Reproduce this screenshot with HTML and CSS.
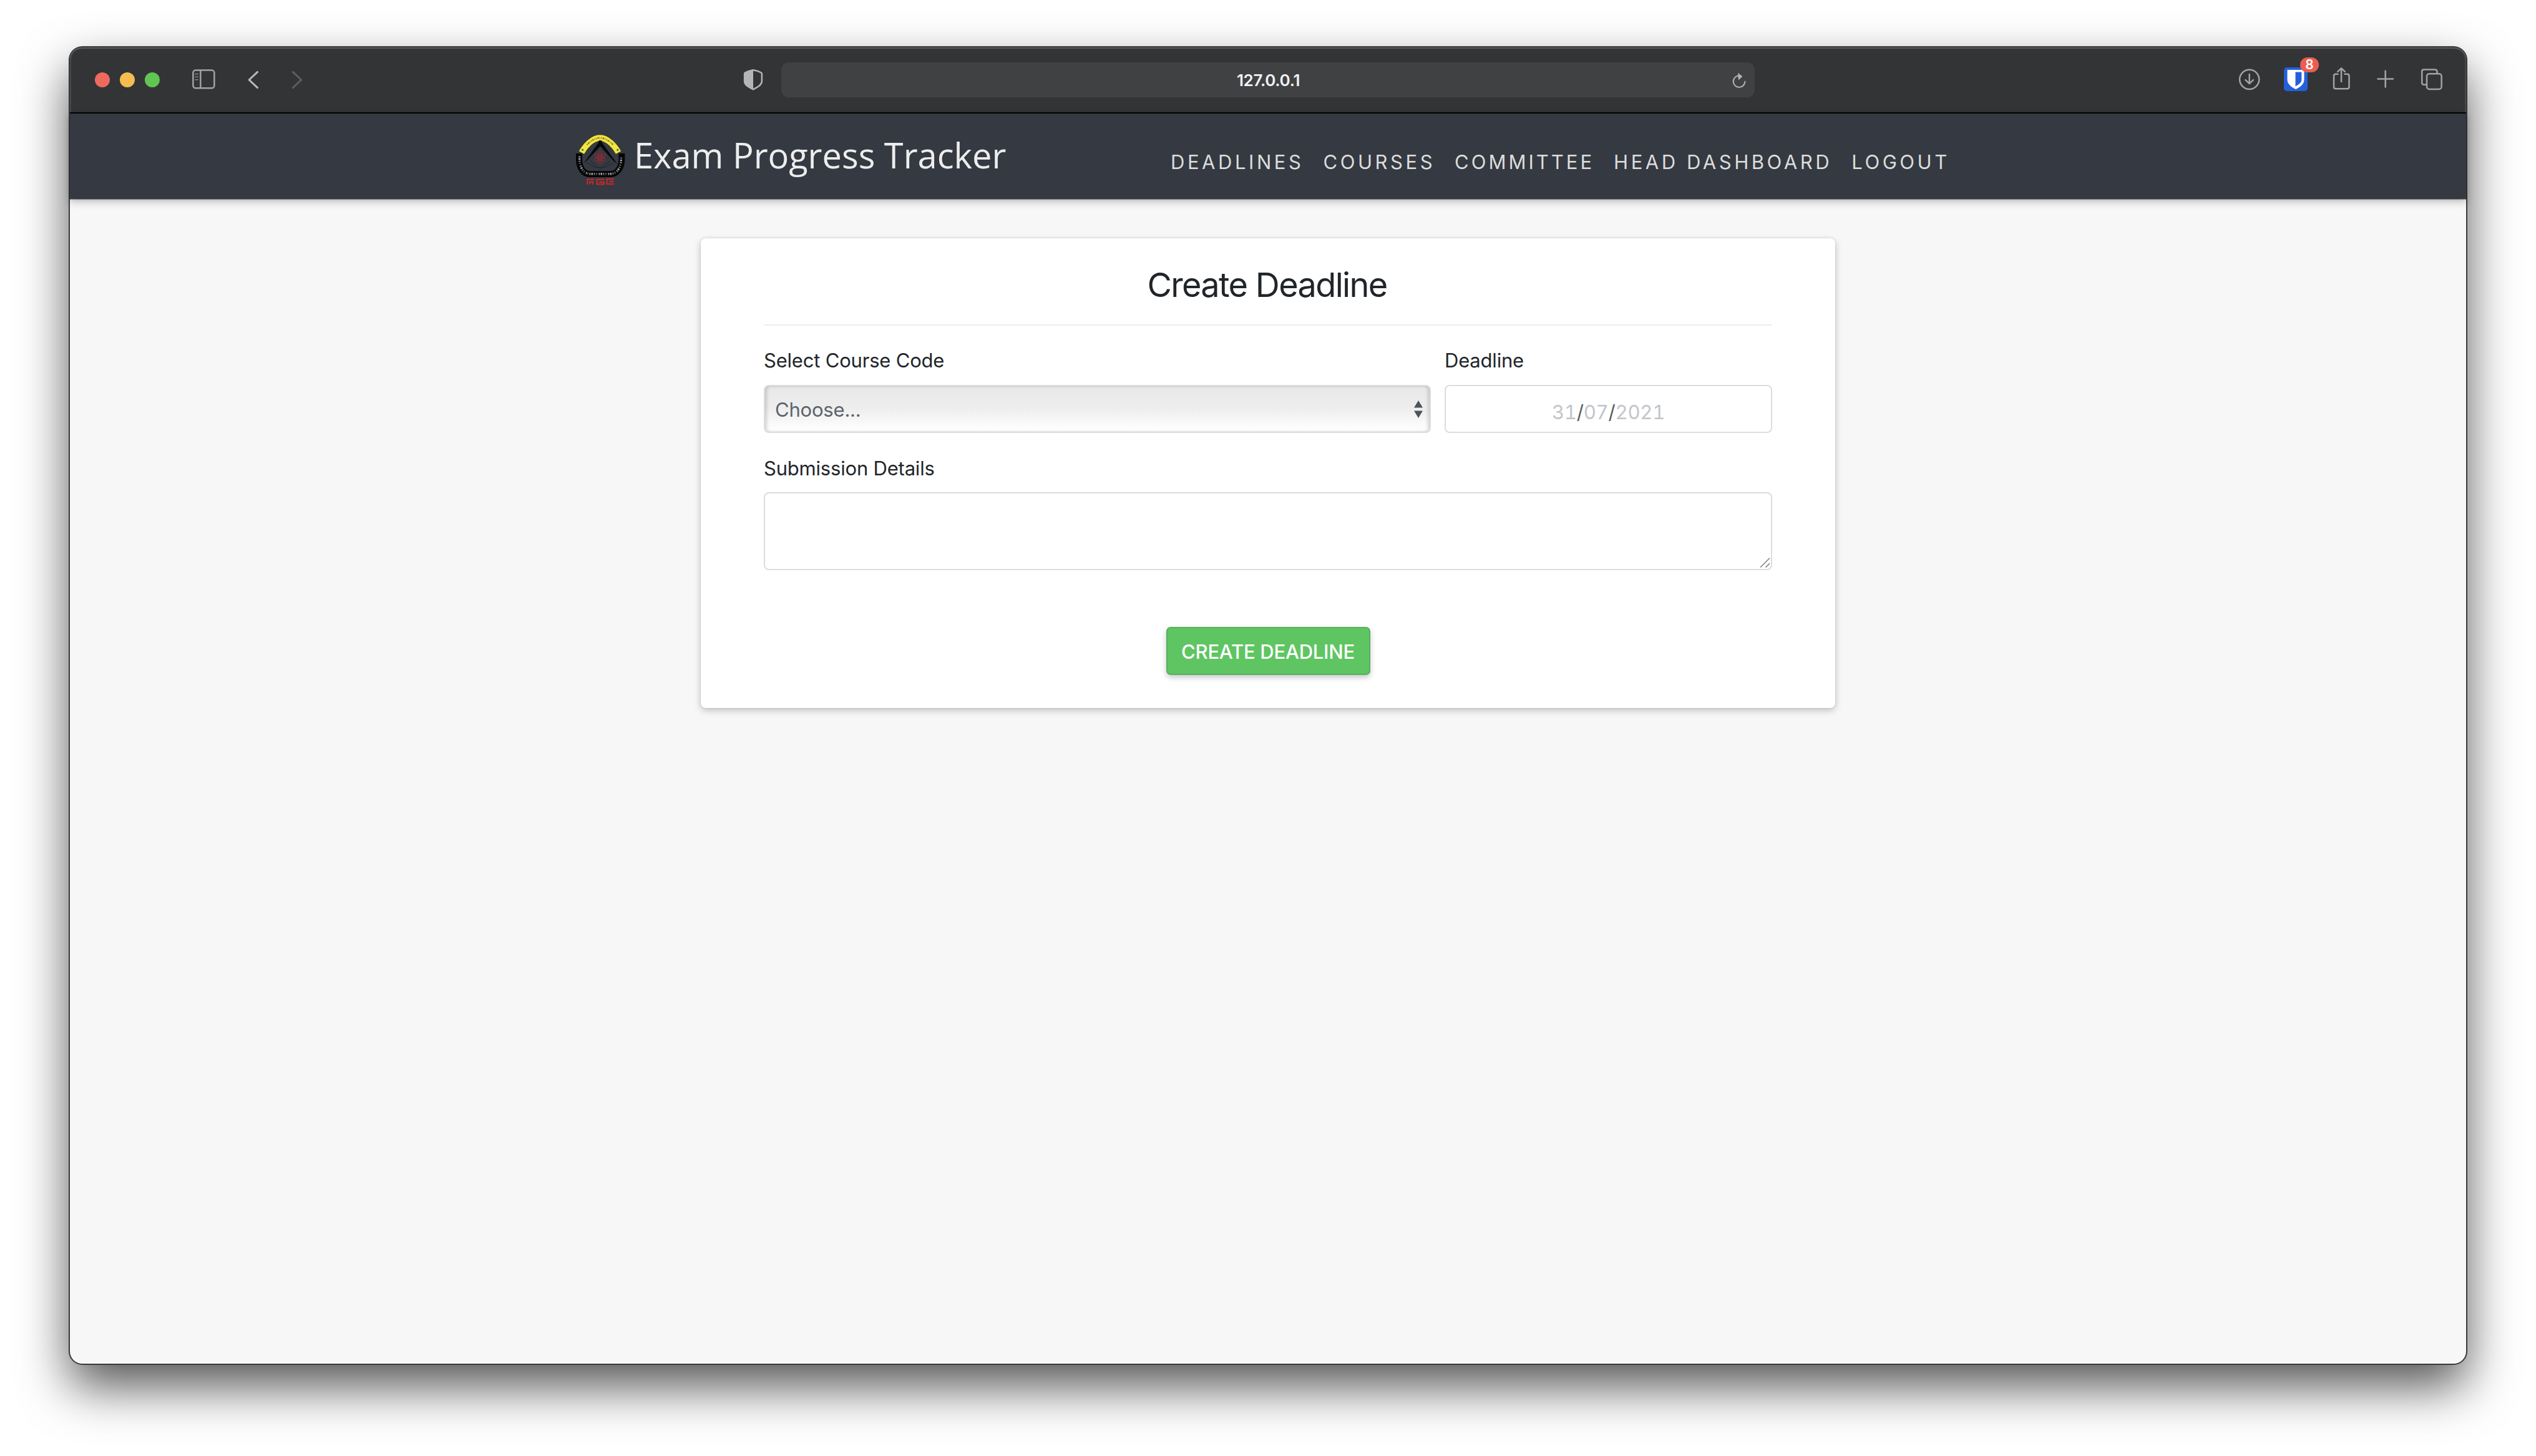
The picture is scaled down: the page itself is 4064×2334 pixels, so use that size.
FILE: index.html
```html
<!DOCTYPE html>
<html lang="en">
<head>
<meta charset="utf-8">
<title>Exam Progress Tracker</title>
<link rel="stylesheet" href="styles.css">
</head>
<body>
<div class="window">
  <header class="toolbar">
    <div class="lights"><span class="light red"></span><span class="light amber"></span><span class="light green"></span></div>
    <svg class="icon sidebar" viewBox="0 0 40 40"><rect x="3.4" y="4.6" width="34" height="28.6" rx="4"/><path d="M15.4 5v28"/><path class="thin" d="M6.8 10.6h4.6M6.8 15.2h4.6M6.8 19.8h4.6"/></svg>
    <svg class="icon back" viewBox="0 0 40 40"><path d="M26.6 7.4L13.2 20l13.4 12.6"/></svg>
    <svg class="icon forward" viewBox="0 0 40 40"><path d="M14.4 7.4L27.8 20L14.4 32.6"/></svg>
    <svg class="icon privacy" viewBox="0 0 40 40"><path d="M20 4.2c4 .6 9.400 2.200 13 4.300c.7.5.9 1 .9 2V22c0 6.500-7.400 9.800-13.900 13.300C13.500 31.800 6.100 28.500 6.100 22V10.500c0-1 .2-1.500.9-2C10.600 6.400 16 4.800 20 4.200z"/><path class="half" d="M20 3.500c-4 .6-9.500 2.500-13.500 4.800C5.300 9 5 9.600 5 11v12c0 6 7.500 9.500 15 13z"/></svg>
    <div class="address">
      <span class="host">127.0.0.1</span>
      <svg class="reload" viewBox="0 0 24 28"><path d="M13.500 5.300H12A9.300 9.300 0 1 0 21.300 15"/><path class="tip" d="M10 .8L17.300 6.400L11 12.400z"/></svg>
    </div>
    <svg class="icon download" viewBox="0 0 40 40"><circle cx="19.700" cy="19.300" r="15.600"/><path d="M19.700 11v15M13.500 20.200l6.200 6l6.200-6"/></svg>
    <div class="extension">
      <svg class="vault" viewBox="0 0 40 40"><rect x="1" y="0" width="38" height="38" rx="5" fill="#2460dc"/><path fill="#fff" d="M6.500 4h27v15.500c0 7.500-6.500 12.300-13.500 15.500C13 31.800 6.500 27 6.500 19.500z"/><path fill="#2460dc" d="M19.500 7.600h9.800v12c0 5-4.300 8-9.800 10.800z"/></svg>
      <span class="badge">8</span>
    </div>
    <svg class="icon share" viewBox="0 0 40 40"><path d="M14.500 10.800H11q-3 0-3 3V31.300q0 3 3 3H29.500q3 0 3-3V13.800q0-3-3-3H25.500M20 1.500V23M14.200 6.800L20 1.300l5.800 5.500"/></svg>
    <svg class="icon plus" viewBox="0 0 40 40"><path d="M7.500 18.500h24.400M19.700 5.800v25.600"/></svg>
    <svg class="icon tabs" viewBox="0 0 40 40"><rect x="12" y="10.300" width="23.600" height="24.600" rx="4"/><path d="M11 27.700H7.200q-3-.3-3-3.300V6.600q0-3 3-3H25q3 0 3.500 3v2.600"/></svg>
  </header>

  <nav class="navbar">
    <a class="brand">
      <svg class="crest" viewBox="36 30 244 248">
        <path class="yellow" d="M66 118C82 88 118 47 155 47S228 88 244 118"/>
        <path class="marks dark" d="M92 80C112 60 134 47 155 47S198 60 218 80"/>
        <circle cx="71" cy="105" r="5" fill="#2f8a4c"/><circle cx="240" cy="105" r="5" fill="#2f8a4c"/>
        <path class="black" d="M54 122V150C54 190 74 222 106 222H206C238 222 260 190 260 150V122"/>
        <path class="marks light-marks" d="M56 136V150C56 184 72 214 98 220"/>
        <path class="marks light-marks" d="M104 221H205C238 221 257 188 257 150V136"/>
        <path fill="#08090a" d="M156 58L238 172L222 160L156 88L98 150L78 168z"/>
        <path fill="#08090a" d="M150 60h13l6 28h-25z"/>
        <path fill="#343840" d="M156 96L209 160L156 202L100 160z"/>
        <path class="faint" d="M92 168l40 22h48l40-22M110 160l46 38l46-38"/>
        <g class="atom"><ellipse cx="155" cy="142" rx="10" ry="29"/><ellipse cx="155" cy="142" rx="10" ry="29" transform="rotate(60 155 142)"/><ellipse cx="155" cy="142" rx="10" ry="29" transform="rotate(-60 155 142)"/><circle cx="155" cy="142" r="5"/></g>
        <path class="initials" d="M94 272V248h34M103 260h19M106 271V262M120 272V256M176 248H140V271h34V261H150M186 246h36M186 270h36M188 246v24M199 258h22"/>
      </svg>
      <span class="brand-name">Exam Progress Tracker</span>
    </a>
    <div class="links">
      <a>DEADLINES</a><a>COURSES</a><a class="committee">COMMITTEE</a><a>HEAD DASHBOARD</a><a>LOGOUT</a>
    </div>
  </nav>

  <main class="page">
    <form class="card">
      <h1 class="title">Create Deadline</h1>
      <div class="row">
        <div class="field course">
          <label class="label">Select Course Code</label>
          <div class="control select"><span>Choose...</span>
            <svg class="arrows" viewBox="0 0 14 28"><path d="M7 0L14 11.500H0zM7 28L14 16.500H0z"/></svg>
          </div>
        </div>
        <div class="field due">
          <label class="label">Deadline</label>
          <div class="control date"><span>31</span><b>/</b><span>07</span><b>/</b><span>2021</span></div>
        </div>
      </div>
      <div class="field details">
        <label class="label">Submission Details</label>
        <div class="control textarea"><svg class="grip" viewBox="0 0 18 18"><path d="M1 16.500L16 1.500M9.500 16.500L16 10"/></svg></div>
      </div>
      <button class="submit" type="button">CREATE DEADLINE</button>
    </form>
  </main>
</div>
</body>
</html>
```
FILE: styles.css
```css
* { box-sizing: border-box; }

body {
  margin: 0;
  padding: 76px 112px 148px;
  height: 2334px;
  overflow: hidden;
  background: #fff;
  font-family: Inter, "Liberation Sans", sans-serif;
  font-size: 31px;
  line-height: 48px;
  color: #212529;
}

.window {
  display: flex;
  flex-direction: column;
  height: 2110px;
  border-radius: 20px;
  background: #f7f7f7;
  box-shadow: 0 0 0 2px #383939, 0 36px 80px rgba(0, 0, 0, .68);
}

/* Browser toolbar */
.toolbar {
  display: flex;
  align-items: center;
  flex: none;
  height: 106px;
  padding: 0 35px 0 40px;
  border-bottom: 2px solid #000;
  border-radius: 20px 20px 0 0;
  background: #333436;
  box-shadow: inset 0 2px 0 #57595a, inset 2px 0 0 #48494b, inset -2px 0 0 #48494b;
}

.lights { display: flex; gap: 16px; margin-right: 50px; }
.light { width: 24px; height: 24px; border-radius: 50%; }
.red { background: #ed6a5e; }
.amber { background: #f5bd4f; }
.green { background: #61c554; }

.icon {
  flex: none;
  width: 40px;
  height: 40px;
  fill: none;
  stroke: #a2a3a5;
  stroke-width: 2.5;
  stroke-linecap: round;
  stroke-linejoin: round;
}
.icon .thin { stroke-width: 1.6; opacity: .7; }
.sidebar { margin-right: 40px; }
.back { margin-right: 29px; stroke: #b9babb; stroke-width: 3; }
.forward { margin-right: 692px; stroke: #5d5e60; stroke-width: 3; }
.privacy { margin-right: 25px; stroke: #b4b5b7; }
.privacy .half { fill: #b4b5b7; stroke: none; }

.address {
  display: flex;
  align-items: center;
  width: 1560px;
  height: 56px;
  padding: 0 13px 0 36px;
  border-radius: 12px;
  background: #404143;
}
.host {
  flex: 1;
  padding-top: 1px;
  padding-left: 2px;
  color: #f1f1f2;
  font-size: 26px;
  font-weight: 600;
  line-height: 32px;
  letter-spacing: -.3px;
  text-align: center;
}
.reload { width: 24px; height: 28px; margin-top: 4px; fill: none; stroke: #a9aaab; stroke-width: 2.3; stroke-linecap: round; }
.reload .tip { fill: #b5b6b7; stroke: none; }

.download { margin-left: auto; }
.extension { position: relative; width: 40px; height: 40px; margin: 0 33px 0 34px; }
.vault { display: block; width: 40px; height: 40px; }
.badge {
  position: absolute;
  left: 27px;
  top: -16px;
  width: 30px;
  height: 24px;
  border-radius: 12px;
  background: #ec5d50;
  color: #fff;
  font-size: 21px;
  font-weight: 600;
  line-height: 24px;
  text-align: center;
}
.share { margin-right: 31px; }
.plus { margin-right: 34px; stroke-width: 2.6; }

/* Site navigation */
.navbar {
  display: flex;
  flex: none;
  height: 137px;
  padding-left: 810px;
  background: #353941;
  box-shadow: 0 4px 12px rgba(0, 0, 0, .26), 0 1px 1px rgba(0, 0, 0, .35);
}
.brand { display: flex; width: 954px; padding-top: 28px; color: #ededee; }
.crest { flex: none; width: 81px; height: 83px; margin: 5px 13px 0 0; fill: none; }
.yellow { stroke: #f5e63c; stroke-width: 28; }
.black { stroke: #060607; stroke-width: 30; }
.marks { stroke-width: 9; stroke-dasharray: 4 4 7 3 3 5; }
.dark { stroke: #85813a; }
.light-marks { stroke: #9b9c9e; stroke-width: 10; stroke-dasharray: 5 4 8 5 4 7 3 9; }
.faint { stroke: #23262b; stroke-width: 3; }
.atom { stroke: #8c2b35; stroke-width: 4; }
.initials { stroke: #bb2a30; stroke-width: 7; }
.brand-name {
  font-family: "Open Sans", sans-serif;
  font-size: 56px;
  font-weight: 430;
  line-height: 76px;
  letter-spacing: 0;
  white-space: nowrap;
}
.links { display: flex; gap: 31px; padding-top: 54px; color: #dcdddd; letter-spacing: 4.55px; white-space: nowrap; }
.committee { letter-spacing: 4px; }

/* Deadline form */
.page { display: flex; flex: 1; align-items: flex-start; justify-content: center; padding-top: 63px; }
.card {
  display: flex;
  flex-direction: column;
  width: 1818px;
  height: 753px;
  padding: 41px 101px 0;
  border-radius: 8px;
  background: #fff;
  box-shadow: 0 4px 12px rgba(0, 0, 0, .22), 0 0 3px rgba(0, 0, 0, .14);
}
.title {
  margin: 0;
  height: 99px;
  padding-right: 3px;
  border-bottom: 2px solid #ededee;
  font-size: 54px;
  font-weight: 430;
  line-height: 67px;
  letter-spacing: -1.65px;
  text-align: center;
}
.row { display: flex; gap: 22px; padding-top: 32px; }
.field { display: flex; flex-direction: column; letter-spacing: -.2px; }
.course { width: 1069px; }
.due { width: 525px; }
.details { padding-top: 33px; }
.label { margin-bottom: 15px; }
.details .label { margin-bottom: 14px; }

.control {
  display: flex;
  align-items: center;
  height: 77px;
  border: 2px solid #d9dde2;
  border-radius: 8px;
  background: #fff;
  color: #5d646b;
}
.select {
  justify-content: space-between;
  padding: 2px 11px 0 16px;
  background: linear-gradient(#e8e8e8, #eeeeee 50%, #fff 98%);
  box-shadow: inset 4px 0 5px -1px rgba(0, 0, 0, .15), inset -4px 0 5px -1px rgba(0, 0, 0, .15);
}
.arrows { width: 14px; height: 28px; margin-bottom: 1px; fill: #4b535b; }
.date {
  justify-content: center;
  padding-top: 10px;
  color: #c1c5c9;
  font-variant-numeric: tabular-nums;
}
.date b { font-weight: 400; color: #555c63; }
.textarea { height: 125px; align-items: flex-end; justify-content: flex-end; }
.grip { width: 18px; height: 18px; margin: 0 0 1px 0; fill: none; stroke: #808080; stroke-width: 1.6; }

.submit {
  align-self: center;
  width: 327px;
  height: 77px;
  margin-top: 91px;
  padding: 2px 0 0;
  border: 2px solid #55b05a;
  border-radius: 7px;
  background: #5fc562;
  box-shadow: 0 4px 10px rgba(0, 0, 0, .22);
  color: #fff;
  font: 450 31px/48px Inter, "Liberation Sans", sans-serif;
  letter-spacing: -.25px;
}
```
